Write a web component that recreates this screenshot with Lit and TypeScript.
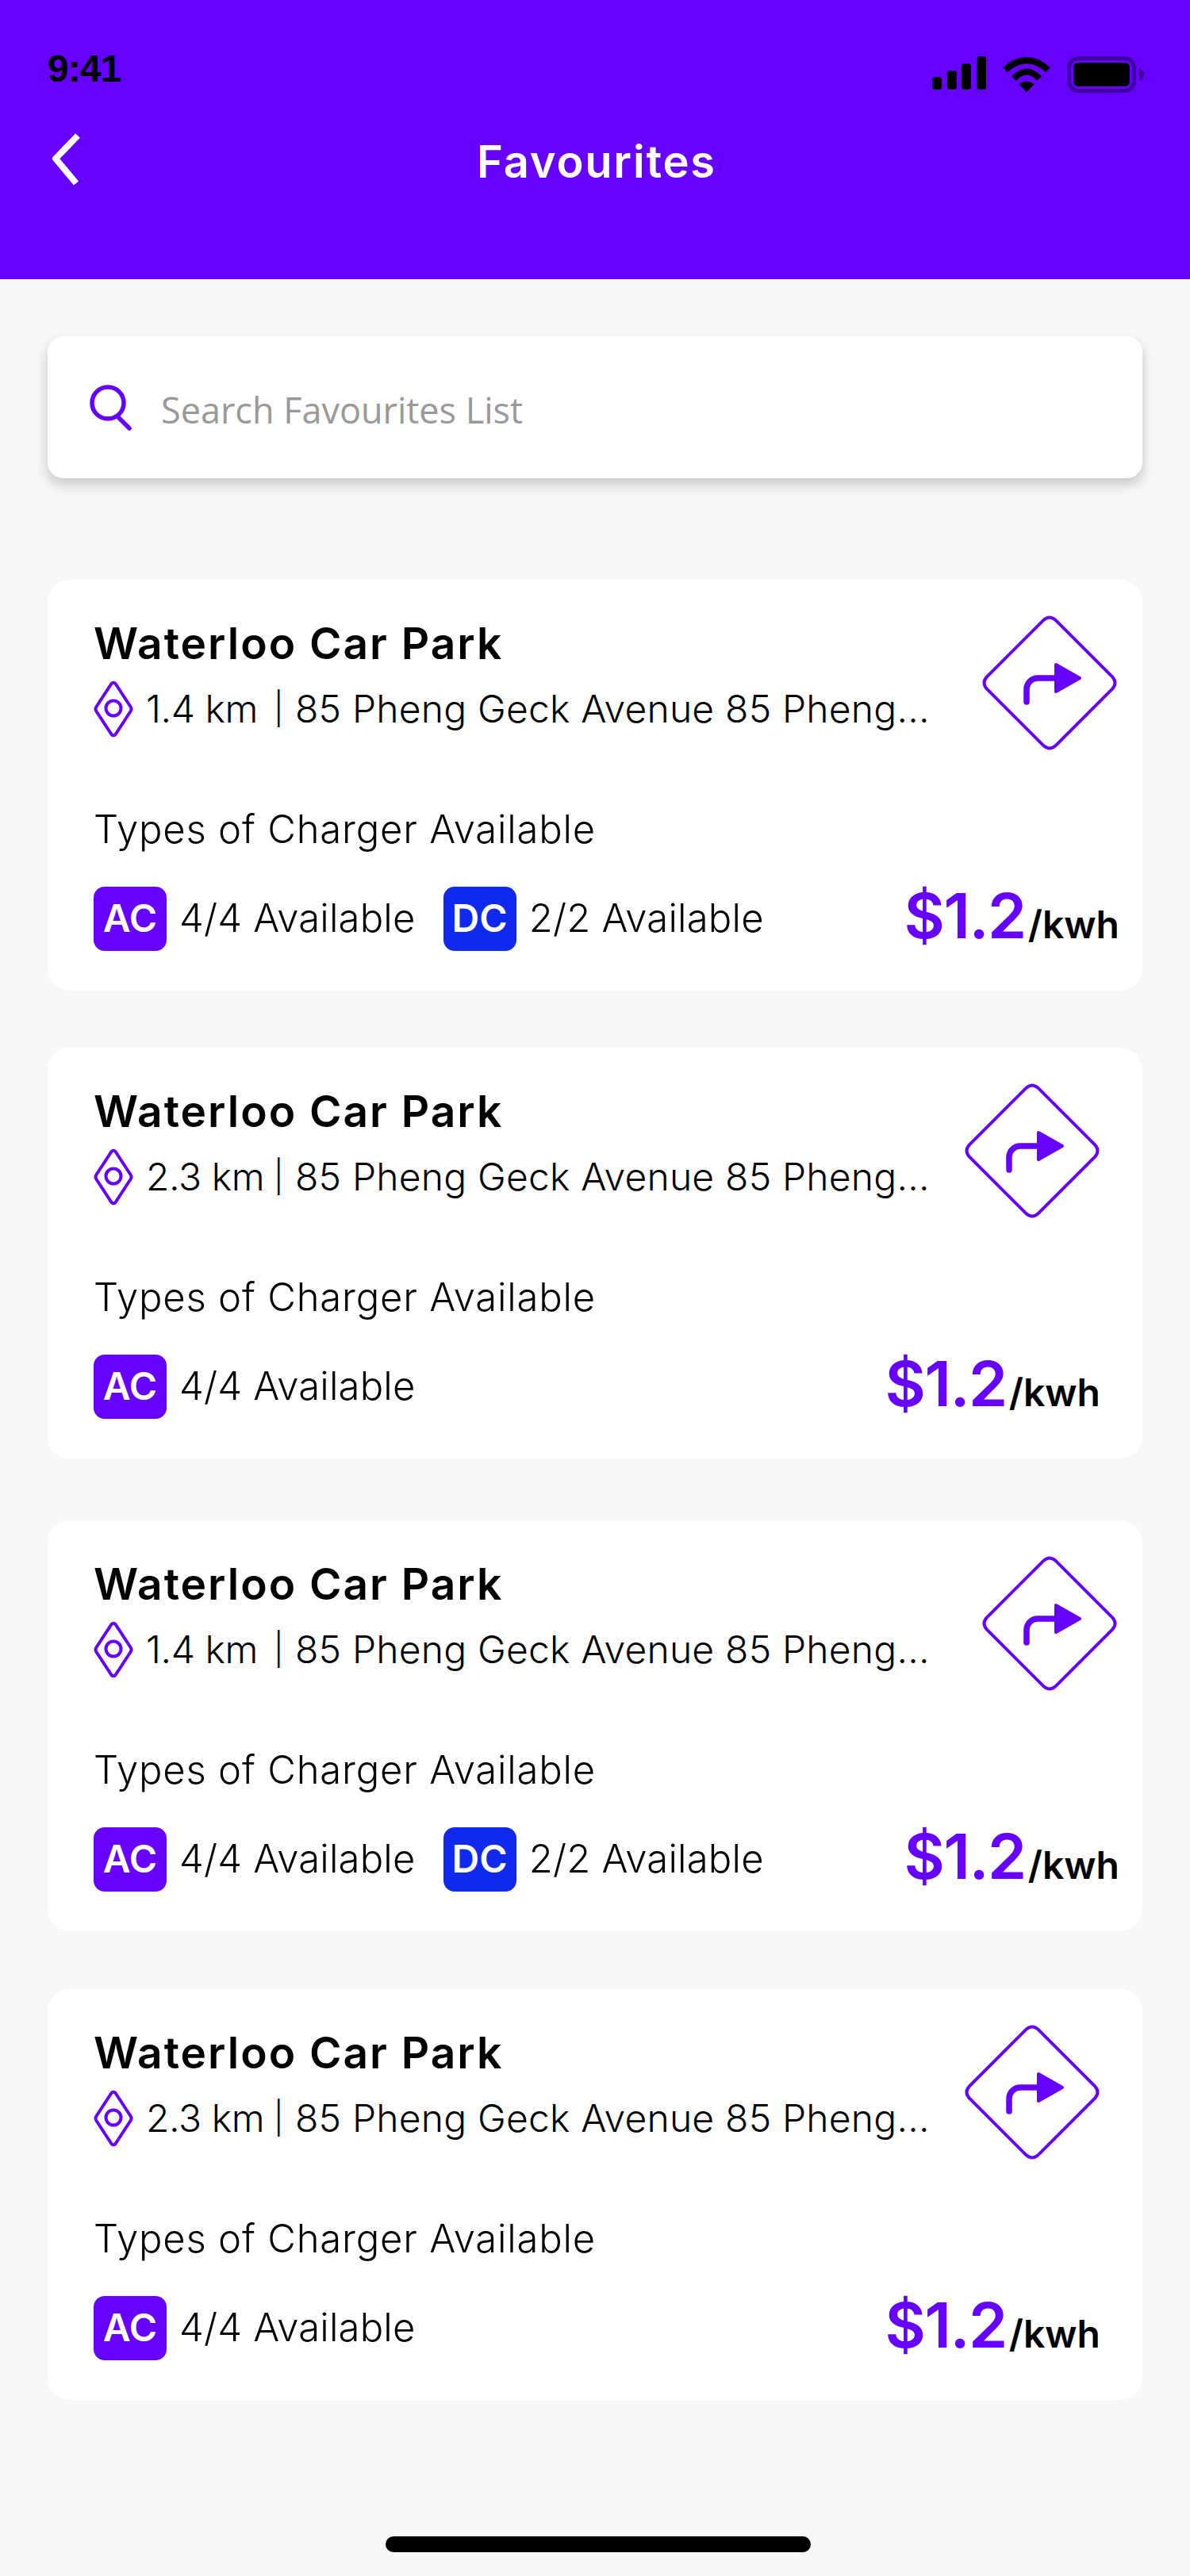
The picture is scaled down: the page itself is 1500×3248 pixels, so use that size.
import { LitElement, html, css, svg } from 'lit';
import { customElement } from 'lit/decorators.js';
import { classMap } from 'lit/directives/class-map.js';

type Charger = { type: 'AC' | 'DC'; count: string };
type Park = { distance: string; chargers: Charger[]; inset: boolean };

const both: Charger[] = [
  { type: 'AC', count: '4/4' },
  { type: 'DC', count: '2/2' },
];
const acOnly: Charger[] = [{ type: 'AC', count: '4/4' }];

const parks: Park[] = [
  { distance: '1.4 km', chargers: both, inset: false },
  { distance: '2.3 km', chargers: acOnly, inset: true },
  { distance: '1.4 km', chargers: both, inset: false },
  { distance: '2.3 km', chargers: acOnly, inset: true },
];

const directionIcon = svg`
  <svg class="direction" width="172" height="172" viewBox="0 0 172 172" fill="none">
    <path d="M78.5 5.5 Q86 -1 93.5 5.5 L166.5 78.5 Q173 86 166.5 93.5 L93.5 166.5 Q86 173 78.5 166.5 L5.5 93.5 Q-1 86 5.5 78.5 Z"
      transform="translate(86 86) scale(.985) translate(-86 -86)" stroke="#6600ff" stroke-width="4" />
    <path d="M57 110 V94 a14 14 0 0 1 14 -14 H96" stroke="#6600ff" stroke-width="7.5" stroke-linecap="round" />
    <path d="M94 63 L124 80 L94 97 Z" fill="#6600ff" stroke="#6600ff" stroke-width="4" stroke-linejoin="round" />
  </svg>`;

const pinIcon = svg`
  <svg class="pin" width="50" height="72" viewBox="0 0 50 72" fill="none">
    <path d="M22.5 4 Q25 1.500 27.500 4 L46.500 33 Q48.500 36 46.500 39 L27.500 68 Q25 70.500 22.500 68 L3.500 39 Q1.500 36 3.500 33 Z"
      stroke="#6600ff" stroke-width="4" />
    <circle cx="25" cy="35" r="9.500" stroke="#6600ff" stroke-width="4" />
  </svg>`;

@customElement('app-root')
export class AppRoot extends LitElement {
  static styles = css`
    :host {
      display: block;
      width: 1500px;
      height: 3248px;
      background: #f7f7f7;
      font-family: Inter, sans-serif;
      color: #000;
      overflow: hidden;
    }

    header {
      height: 352px;
      background: #6600ff;
      box-sizing: border-box;
      padding-top: 57px;
    }

    .status {
      display: flex;
      justify-content: space-between;
      padding: 0 57px 0 60px;
      height: 60px;
    }

    .time {
      font-family: 'Liberation Sans', sans-serif;
      font-weight: 700;
      font-size: 48px;
      line-height: 60px;
      letter-spacing: -1px;
    }

    .status-icons {
      display: flex;
      align-items: flex-start;
      gap: 20px;
      padding-top: 14px;
    }

    .nav {
      display: grid;
      grid-template-columns: 1fr auto 1fr;
      align-items: center;
      height: 84px;
      margin-top: 41px;
      padding: 0 60px;
    }

    .nav h1 {
      margin: 0;
      font-size: 56px;
      font-weight: 600;
      color: #fff;
      letter-spacing: 1.8px;
      line-height: 84px;
      padding: 4px 0 0 4px;
    }

    .search {
      display: flex;
      align-items: center;
      gap: 36px;
      height: 179px;
      margin: 72px 60px 0;
      padding-left: 53px;
      background: #fff;
      border-radius: 20px;
      box-shadow: 0 8px 16px rgba(0, 0, 0, 0.2);
    }

    .search span {
      font-family: 'Open Sans', sans-serif;
      font-size: 45px;
      color: #999;
      padding-top: 6px;
    }

    .list {
      display: flex;
      flex-direction: column;
      gap: 72px;
      margin: 128px 60px 0;
    }

    .card {
      box-sizing: border-box;
      height: 518px;
      padding: 30px 29px 0 58px;
      background: #fff;
      border-radius: 28px;
    }

    .card:nth-child(3) {
      margin-top: 6px;
    }

    .card:nth-child(4) {
      margin-top: 1px;
    }

    .card.inset {
      padding-right: 53px;
    }

    .top {
      display: flex;
      justify-content: space-between;
      align-items: flex-start;
    }

    .title {
      margin-top: 15px;
      font-size: 55px;
      font-weight: 600;
      line-height: 70px;
      letter-spacing: 2px;
    }

    .address {
      display: flex;
      align-items: center;
      margin-top: 12px;
      font-size: 48px;
      font-weight: 300;
      line-height: 72px;
      letter-spacing: 0.2px;
      white-space: nowrap;
    }

    .distance {
      width: 161px;
      margin-left: 16px;
      letter-spacing: -0.4px;
    }

    .sep {
      width: 27px;
      font-size: 40px;
    }

    .direction {
      margin: 14px 2px 0 0;
      flex: none;
    }

    .card.inset .direction {
      margin-right: 0;
    }

    .types {
      margin-top: 64px;
      font-size: 49px;
      font-weight: 300;
      line-height: 70px;
      letter-spacing: 0.8px;
    }

    .bottom {
      display: flex;
      justify-content: space-between;
      align-items: flex-start;
      margin-top: 37px;
    }

    .chargers {
      display: flex;
      gap: 35px;
    }

    .charger {
      display: flex;
      align-items: center;
      gap: 16px;
      font-size: 49px;
      font-weight: 300;
      letter-spacing: 0.2px;
    }

    .count {
      padding-bottom: 2px;
    }

    .badge {
      display: flex;
      align-items: center;
      justify-content: center;
      box-sizing: border-box;
      width: 92px;
      height: 81px;
      padding-bottom: 3px;
      border-radius: 14px;
      background: #6600ff;
      color: #fff;
      font-size: 48px;
      font-weight: 600;
      letter-spacing: 0;
    }

    .badge.dc {
      background: #1029ee;
    }

    .price {
      display: flex;
      align-items: baseline;
      gap: 3px;
      margin-top: -12px;
      font-size: 48px;
      font-weight: 600;
    }

    .price b {
      color: #6600ff;
      font-size: 79px;
      font-weight: 600;
      letter-spacing: -1.5px;
    }

    .home {
      width: 536px;
      height: 20px;
      margin: 172px 0 0 486px;
      border-radius: 10px;
      background: #000;
    }
  `;

  renderCard(park: Park) {
    return html`
      <section class=${classMap({ card: true, inset: park.inset })}>
        <div class="top">
          <div>
            <div class="title">Waterloo Car Park</div>
            <div class="address">
              ${pinIcon}
              <span class="distance">${park.distance}</span>
              <span class="sep">|</span>
              <span>85 Pheng Geck Avenue 85 Pheng...</span>
            </div>
          </div>
          ${directionIcon}
        </div>
        <div class="types">Types of Charger Available</div>
        <div class="bottom">
          <div class="chargers">
            ${park.chargers.map(
              (c) => html`
                <div class="charger">
                  <span class=${classMap({ badge: true, dc: c.type === 'DC' })}>${c.type}</span>
                  <span class="count">${c.count} Available</span>
                </div>
              `
            )}
          </div>
          <div class="price"><b>$1.2</b><span>/kwh</span></div>
        </div>
      </section>
    `;
  }

  render() {
    return html`
      <header>
        <div class="status">
          <span class="time">9:41</span>
          <div class="status-icons">
            <svg width="68" height="44" viewBox="0 0 68 44" fill="#000">
              <rect x="0" y="26" width="12" height="16" rx="4" />
              <rect x="19" y="18" width="12" height="24" rx="4" />
              <rect x="37" y="9" width="12" height="33" rx="4" />
              <rect x="56" y="0" width="12" height="42" rx="4" />
            </svg>
            <svg width="62" height="46" viewBox="0 0 62 46" fill="none" stroke="#000" stroke-width="8">
              <path d="M4 17 Q31 -7 58 17" />
              <path d="M15 28 Q31 11 47 28" />
              <path d="M21 35 Q31 28 41 35 L31 45 Z" fill="#000" stroke="none" />
            </svg>
            <svg width="98" height="46" viewBox="0 0 98 46" fill="none">
              <rect x="2.500" y="2.500" width="82" height="41" rx="12" stroke="#3f00a0" stroke-width="5" />
              <rect x="8" y="8" width="71" height="30" rx="6" fill="#000" />
              <path d="M91 15 Q97 18 97 23 Q97 28 91 31 Z" fill="#3f00a0" />
            </svg>
          </div>
        </div>
        <div class="nav">
          <svg width="48" height="68" viewBox="0 0 48 68" fill="none">
            <path d="M38 3 L10 32 L36 63" stroke="#fff" stroke-width="8" stroke-linejoin="round" />
          </svg>
          <h1>Favourites</h1>
          <span></span>
        </div>
      </header>

      <div class="search">
        <svg width="54" height="58" viewBox="0 0 54 58" fill="none" stroke="#6600ff" stroke-width="5.500" stroke-linecap="round">
          <circle cx="23" cy="23" r="20" />
          <path d="M35 40 L50 55" />
        </svg>
        <span>Search Favourites List</span>
      </div>

      <div class="list">${parks.map((p) => this.renderCard(p))}</div>

      <div class="home"></div>
    `;
  }
}
